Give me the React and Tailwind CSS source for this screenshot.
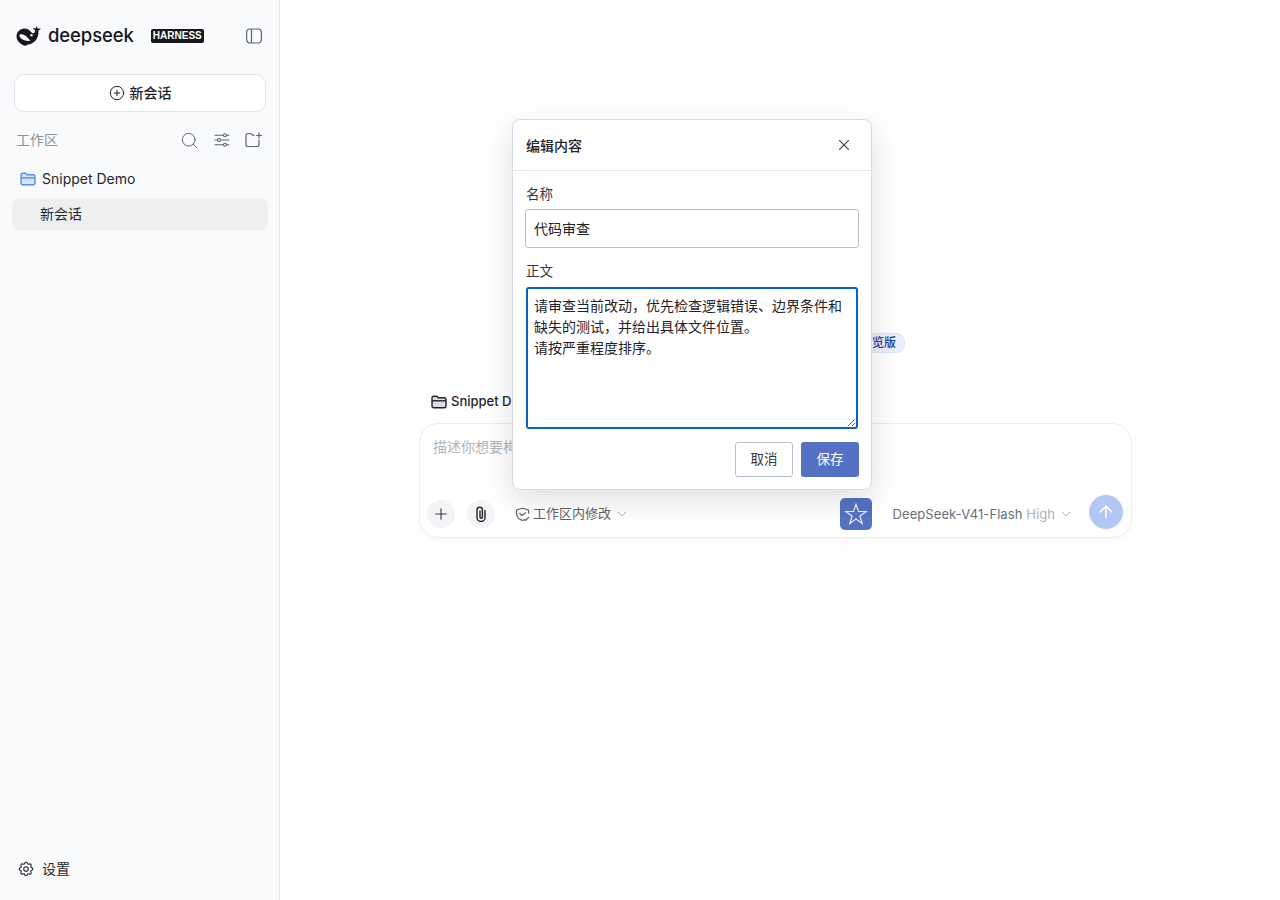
// DeepSeek Harness: new chat page with the edit snippet dialog open
import React from 'react';
import { ArrowUp, ChevronDown, CirclePlus, Plus, Search, X } from 'lucide-react';
import { TbSettings } from 'react-icons/tb';

const WhaleLogo = () => (
  <svg width="25" height="20" viewBox="0 0 25 20" fill="#16181d">
    <path d="M.5 10.500C.5 6.300 3.800 2.500 8.300 2.500c3.200 0 5.300 1.400 7 3.700.9 1 1.700 1.300 2.500 1 .8-.4 1.200-1.300 1.200-2.700L16.800 1.800l2.900.6L20.500 0l1.200 2.400 3.300.1-2.500 2.200c.2 4.800-1.300 8.900-4.500 11.300-2 1.500-4 2.300-6 2.500-1.800 1.400-3.600 1.500-5 .8C2.700 16.700.5 14 .5 10.500z" />
    <path d="M3.800 8.500c2.800-1.200 6.200.6 10.700 6.300-4.200.6-8.200-.8-10.300-3.300-.8-1-1-2.600-.4-3z" fill="#f8f9fb" />
    <circle cx="15.500" cy="9.300" r="1.200" fill="#f8f9fb" />
  </svg>
);

const PanelIcon = () => (
  <svg width="18" height="18" viewBox="0 0 18 18" fill="none" stroke="#5f636b" strokeWidth="1.200">
    <rect x="1.600" y="2" width="14.800" height="14" rx="3.500" />
    <path d="M6.500 2v14" />
  </svg>
);

const SlidersIcon = () => (
  <svg width="16" height="16" viewBox="0 0 16 16" fill="none" stroke="#5f636b" strokeWidth="1.100" strokeLinecap="round">
    <path d="M1 3.200h8.500M12.500 3.200H15M1 8h2.500M6.500 8H15M1 12.800h8.500M12.500 12.800H15" />
    <circle cx="11" cy="3.200" r="1.500" />
    <circle cx="5" cy="8" r="1.500" />
    <circle cx="11" cy="12.800" r="1.500" />
  </svg>
);

const NewFolderIcon = () => (
  <svg width="17" height="16" viewBox="0 0 17 16" fill="none" stroke="#5f636b" strokeWidth="1.200" strokeLinecap="round" strokeLinejoin="round">
    <path d="M9 3.200H7.500L6.200 1.500H3a2 2 0 0 0-2 2V12.500a2 2 0 0 0 2 2H12a2 2 0 0 0 2-2V8" />
    <path d="M14 1v5M11.500 3.500h5" />
  </svg>
);

const FolderIcon = ({ stroke, fill }) => (
  <svg width="16" height="14" viewBox="0 0 16 14" fill={fill} stroke={stroke} strokeWidth="1.400" strokeLinejoin="round">
    <path d="M1 3a1.800 1.800 0 0 1 1.800-1.800h3l1.500 1.600h5.900A1.800 1.800 0 0 1 15 4.600v6.400a1.800 1.800 0 0 1-1.800 1.800H2.800A1.800 1.800 0 0 1 1 11z" />
    <path d="M1 5.800h14" fill="none" />
  </svg>
);

const ClipIcon = () => (
  <svg width="14" height="16" viewBox="0 0 14 16" fill="none" stroke="#1f2329" strokeWidth="1.400" strokeLinecap="round">
    <path d="M11 4.500v7a4 4 0 0 1-8 0V4a2.700 2.700 0 0 1 5.400 0v7a1.200 1.200 0 0 1-2.400 0V5" />
  </svg>
);

const ShieldIcon = () => (
  <svg width="15" height="15" viewBox="0 0 15 15" fill="none" stroke="#5f636b" strokeWidth="1.200" strokeLinecap="round" strokeLinejoin="round">
    <path d="M8 13.600c-3.600-1-6.300-3.200-6.500-6.800V3l6-1.800L13.500 3v3.200" />
    <path d="M4.800 6.500l2 2 3.700-2.700" />
    <path d="M9 12.500l1.200 1 3.300-3" />
  </svg>
);

const StarIcon = () => (
  <svg width="24" height="24" viewBox="0 0 26 26" fill="none" stroke="#eef1fb" strokeWidth="1.300" strokeLinejoin="miter">
    <path d="M13 2.500l2.700 7.800h8.100l-6.600 4.900 2.500 8-6.700-4.900-6.700 4.900 2.500-8-6.600-4.900h8.100z" />
  </svg>
);

const Sidebar = () => (
  <aside className="w-[280px] shrink-0 h-full flex flex-col bg-[#f9fafc] border-r border-[#e4e6eb]">
    <div className="h-[74px] pl-4 pr-4 pb-[3px] flex items-center">
      <WhaleLogo />
      <span className="ml-[7px] text-[18.500px] leading-none font-medium tracking-[-0.1px] text-[#16181d]">deepseek</span>
      <span className="ml-[17px] h-[14px] px-[2px] flex items-center rounded-[2px] bg-[#16181d] text-white text-[10px] font-bold font-['Liberation_Sans',sans-serif]">HARNESS</span>
      <span className="ml-auto"><PanelIcon /></span>
    </div>
    <div className="pl-[14px] pr-[13px]">
      <div className="h-[38px] pb-[1px] flex items-center justify-center gap-[5px] rounded-[10px] border border-[#e0e2e6] bg-white text-[14px] font-medium text-[#1f2329]">
        <CirclePlus size={16} strokeWidth={1.500} />
        新会话
      </div>
    </div>
    <div className="h-[20px] mt-[18px] pl-4 pr-[17px] flex items-center text-[14px] text-[#8f939b]">
      <span className="pb-[2px]">工作区</span>
      <div className="ml-auto flex items-center gap-[15px]">
        <Search size={19} strokeWidth={1.200} color="#5f636b" />
        <SlidersIcon />
        <NewFolderIcon />
      </div>
    </div>
    <div className="h-[20px] mt-[19px] pl-5 flex items-center gap-[6px] text-[14px] text-[#26282d]">
      <FolderIcon stroke="#5b8def" fill="#d6e3fb" />
      <span className="pb-[2px]">Snippet Demo</span>
    </div>
    <div className="h-8 ml-3 mr-[11px] mt-[9px] pl-7 pb-[2px] flex items-center rounded-lg bg-[#eeeff1] text-[14px] text-[#26282d]">新会话</div>
    <div className="mt-auto h-[20px] mb-[21px] pl-[17px] flex items-center gap-[7px] text-[14px] text-[#26282d]">
      <TbSettings size={18} strokeWidth={1.500} />
      <span className="pb-[2px]">设置</span>
    </div>
  </aside>
);

const Composer = () => (
  <div className="w-[713px] ml-[139px]">
    <div className="h-5 pl-3 flex items-center gap-[4px] text-[13px] font-medium text-[#1f2329]">
      <FolderIcon stroke="#1f2329" fill="#dcdde0" />
      Snippet Demo
    </div>
    <div className="h-[115px] mt-[11px] flex flex-col rounded-[20px] border border-[#eceef0] bg-white shadow-[0_2px_8px_rgba(20,30,50,0.03)]">
      <div className="pl-[13px] pt-[13px] text-[14px] leading-5 text-[#b0b3b9]">描述你想要构建的内容</div>
      <div className="mt-auto h-[34px] mb-[6px] pl-[7px] pr-2 flex items-center">
        <div className="size-7 flex items-center justify-center rounded-full bg-[#f3f4f6]">
          <Plus size={18} strokeWidth={1.500} color="#3a3d44" />
        </div>
        <div className="size-7 ml-3 flex items-center justify-center rounded-full bg-[#f3f4f6]">
          <ClipIcon />
        </div>
        <div className="ml-5 flex items-center text-[13px] text-[#5f636b]">
          <span className="mr-[3px]"><ShieldIcon /></span>
          工作区内修改
          <ChevronDown size={16} strokeWidth={1.200} color="#9a9da4" className="ml-[3px]" />
        </div>
        <div className="size-8 ml-auto flex items-center justify-center rounded-[5px] bg-[#5471c3]">
          <StarIcon />
        </div>
        <div className="ml-[21px] flex items-center gap-[3px] text-[13px] tracking-[0.08px] text-[#6b6f76]">
          <span className="pt-[1px]">DeepSeek-V41-Flash <span className="text-[#b0b3b9]">High</span></span>
          <ChevronDown size={16} strokeWidth={1.200} color="#9a9da4" />
        </div>
        <div className="size-[34px] ml-[15px] mb-1 flex items-center justify-center rounded-full bg-[#b3c7f5]">
          <ArrowUp size={20} strokeWidth={1.800} color="#ffffff" />
        </div>
      </div>
    </div>
  </div>
);

const EditDialog = () => (
  <div className="absolute left-[232px] top-[119px] w-[360px] h-[371px] flex flex-col rounded-lg border border-[#d8dbe6] bg-white shadow-[0_10px_30px_rgba(25,30,50,0.14)]">
    <div className="h-[51px] shrink-0 pl-[13px] pr-[18px] flex items-center justify-between border-b border-[#e4e6ee]">
      <span className="text-[14px] font-medium text-[#1f2329]">编辑内容</span>
      <X size={18} strokeWidth={1.500} color="#4c5468" />
    </div>
    <div className="flex-1 px-3 flex flex-col">
      <label className="mt-[13px] pl-[1px] text-[13.500px] leading-5 text-[#33363c]">名称</label>
      <input
        readOnly
        value="代码审查"
        className="h-[39px] mt-[5px] px-2 pb-[2px] rounded-[3px] border border-[#b9bfce] text-[14px] text-[#1f2329] outline-none"
      />
      <label className="mt-[13px] pl-[1px] text-[13.500px] leading-5 text-[#33363c]">正文</label>
      <textarea
        readOnly
        value={'请审查当前改动，优先检查逻辑错误、边界条件和缺失的测试，并给出具体文件位置。\n请按严重程度排序。'}
        className="h-[142px] mt-[6px] mx-[1px] px-[6px] py-[6px] rounded-[3px] border-2 border-[#0a5fc9] text-[14px] leading-[21px] text-[#1f2329] outline-none"
      />
      <div className="mt-[13px] flex justify-end gap-2">
        <div className="w-[58px] h-[35px] flex items-center justify-center rounded-[3px] border border-[#b9bfce] text-[13.500px] text-[#33363c]">取消</div>
        <div className="w-[58px] h-[35px] flex items-center justify-center rounded-[3px] bg-[#5471c3] text-[13.500px] text-white">保存</div>
      </div>
    </div>
  </div>
);

export default function App() {
  return (
    <div className="h-[900px] flex overflow-hidden bg-white font-['Inter','Noto_Sans_CJK_SC',sans-serif]">
      <Sidebar />
      <main className="relative flex-1 flex flex-col pt-[333px]">
        <div className="h-5 w-[625px] flex justify-end">
          <span className="h-5 px-2 flex items-center rounded-lg border border-[#dbe5f9] bg-[#e8eefb] text-[12px] font-medium text-[#1f3f8f]">预览版</span>
        </div>
        <div className="mt-[39px]">
          <Composer />
        </div>
        <EditDialog />
      </main>
    </div>
  );
}
